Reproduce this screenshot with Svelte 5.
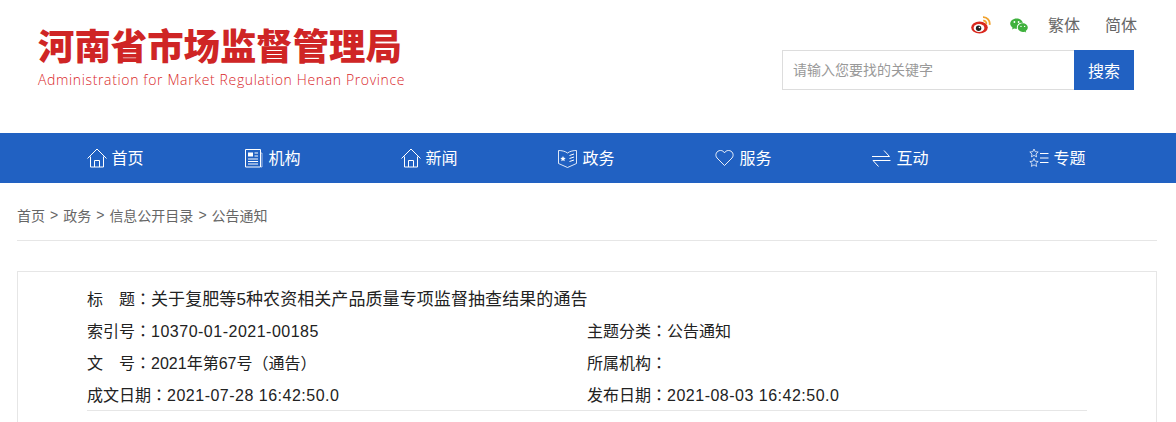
<script>
	const navItems = [
		{ name: '首页', icon: 'home' },
		{ name: '机构', icon: 'news' },
		{ name: '新闻', icon: 'home' },
		{ name: '政务', icon: 'book' },
		{ name: '服务', icon: 'heart' },
		{ name: '互动', icon: 'swap' },
		{ name: '专题', icon: 'stars' }
	];

	const crumbs = ['首页', '政务', '信息公开目录', '公告通知'];

	const rows = [
		[{ label: '索引号', value: '10370-01-2021-00185', num: true }, { label: '主题分类', value: '公告通知' }],
		[{ label: '文　号', value: '2021年第67号', note: '通告' }, { label: '所属机构', value: '' }],
		[{ label: '成文日期', value: '2021-07-28 16:42:50.0', num: true }, { label: '发布日期', value: '2021-08-03 16:42:50.0', num: true }]
	];
</script>

<div class="page">
	<header class="header">
		<div class="logo">
			<div class="logo-cn">河南省市场监督管理局</div>
			<div class="logo-en">Administration for Market Regulation Henan Province</div>
		</div>
		<div class="tools">
			<div class="links">
				<svg class="weibo" width="20" height="18" viewBox="0 0 20 18">
					<ellipse cx="8.5" cy="11.5" rx="8.3" ry="6" fill="#d9281e" />
					<ellipse cx="8" cy="12" rx="5.4" ry="4" fill="#fff" />
					<circle cx="7.6" cy="12.2" r="2.7" fill="#222" />
					<circle cx="8.4" cy="11.5" r="0.8" fill="#fff" />
					<path d="M12 1.2a6.4 6.4 0 0 1 6.6 7.6" fill="none" stroke="#f0a22e" stroke-width="1.8" />
					<path d="M12.2 4.6a3 3 0 0 1 3.2 3.6" fill="none" stroke="#f0a22e" stroke-width="1.6" />
				</svg>
				<svg class="wechat" width="18" height="15" viewBox="0 0 18 15">
					<path d="M6.6 0.4C3 0.4 0.2 2.7 0.2 5.6c0 1.7 1 3.1 2.4 4.1L2 11.6l2.2-1.1c.8.2 1.6.3 2.4.3h.5a4.6 4.6 0 0 1 5.8-5.8C12.400 2.300 9.800 0.400 6.600 0.400z" fill="#3fb13d" />
					<path d="M17.800 9.600c0-2.400-2.300-4.300-5-4.300s-5 1.900-5 4.300 2.300 4.300 5 4.300c.6 0 1.100-.1 1.700-.2l1.700.9-.5-1.500c1.200-.8 2.100-2.100 2.100-3.500z" fill="#3fb13d" />
					<circle cx="4.400" cy="4" r="0.9" fill="#fff" />
					<circle cx="8.600" cy="4" r="0.9" fill="#fff" />
					<circle cx="11" cy="8.400" r="0.7" fill="#fff" />
					<circle cx="14.600" cy="8.400" r="0.7" fill="#fff" />
				</svg>
				<span class="lang">繁体</span>
				<span class="lang">简体</span>
			</div>
			<div class="search">
				<input class="search-input" type="text" placeholder="请输入您要找的关键字" />
				<button class="search-btn">搜索</button>
			</div>
		</div>
	</header>

	<nav class="nav">
		{#each navItems as item}
			<div class="nav-item">
				<svg class="nav-icon" width="20" height="20" viewBox="0 0 20 20" fill="none" stroke="#fff" stroke-width="1">
					{#if item.icon === 'home'}
						<path d="M0.500 10.500L10 1l9.500 9.500" />
						<path d="M3.500 8.500v10.500h13V8.500" />
						<path d="M7.500 19v-6.500h5V19" />
					{:else if item.icon === 'news'}
						<path d="M1.500 1.500h15v17.500h-15z" />
						<path d="M16.500 5h1.500v14h-1" opacity="0.6" />
						<rect x="4" y="4.500" width="5" height="4" fill="#fff" stroke="none" />
						<path d="M10.500 5h3.500M10.500 8h3.500M4 11h10M4 13.500h10M4 16h10" />
					{:else if item.icon === 'book'}
						<path d="M0.500 2.500c3 0 6.500.6 9 2.500 2.500-1.900 6-2.500 9-2.500v13L9.500 19.500 0.500 15.500z" opacity="0.85" />
						<path d="M5 8l.8 1.800 1.900.2-1.400 1.300.4 1.900L5 12.200l-1.700 1 .4-1.900L2.300 10l1.900-.2z" fill="#fff" stroke="none" />
						<path d="M11.500 7.500l4.500-1.500M11.500 10.500l4.500-1.500M11.500 13.500l4.500-1.500" />
					{:else if item.icon === 'heart'}
						<path d="M9.500 17.500L2 10C-0.500 7 1.500 2.500 5.500 2.500c2 0 3.200 1 4 2.300.8-1.300 2-2.300 4-2.300 4 0 6 4.500 3.500 7.500z" opacity="0.9" />
					{:else if item.icon === 'swap'}
						<path d="M0 8.500h17.500L12 2.500" />
						<path d="M18.500 12.500H1l5.500 6" />
					{:else}
						<path d="M5 1l1.200 2.700 3 .3-2.200 2 .6 2.900L5 7.400 2.400 8.900 3 6 .8 4l3-.3z" opacity="0.75" />
						<path d="M5 10.500l1.200 2.700 3 .3-2.200 2 .6 2.900L5 16.900l-2.600 1.500.6-2.900-2.200-2 3-.3z" opacity="0.75" />
						<path d="M11 5.500h8.500M11 10h8.500M11 14.500h8.500" />
					{/if}
				</svg>
				<span class="nav-label">{item.name}</span>
			</div>
		{/each}
	</nav>

	<main class="main">
		<div class="crumbs">
			{#each crumbs as crumb, i}
				{#if i > 0}<span class="sep">&gt;</span>{/if}
				<span>{crumb}</span>
			{/each}
		</div>

		<section class="box">
			<div class="info">
				<div class="info-title">标　题<span class="punct">：</span><span class="title-text">关于复肥等5种农资相关产品质量专项监督抽查结果的通告</span></div>
				{#each rows as row}
					<div class="info-row">
						{#each row as cell}
							<div>
								{cell.label}<span class="punct">：</span><span class:num={cell.num}>{cell.value}</span>{#if cell.note}<span class="punct">（</span>{cell.note}<span class="punct">）</span>{/if}
							</div>
						{/each}
					</div>
				{/each}
			</div>
		</section>
	</main>
</div>

<style>
	:global(body) {
		margin: 0;
		background: #fff;
	}

	.page {
		height: 422px;
		overflow: hidden;
		font-family: "Liberation Sans", "Noto Sans CJK SC", sans-serif;
		color: #333;
	}

	.header {
		height: 133px;
		display: flex;
		justify-content: space-between;
		padding: 0 39px 0 38px;
	}

	.logo {
		padding-top: 18px;
	}

	.logo-cn {
		font-family: "Noto Sans CJK SC", sans-serif;
		font-size: 36.4px;
		font-weight: 900;
		line-height: 53px;
		color: #cf2525;
	}

	.logo-en {
		font-family: "Open Sans", sans-serif;
		font-size: 14px;
		font-weight: 300;
		line-height: 18px;
		letter-spacing: 0.64px;
		color: #d9272a;
	}

	.tools {
		display: flex;
		flex-direction: column;
		align-items: flex-end;
	}

	.links {
		display: flex;
		align-items: center;
		height: 48px;
		margin-bottom: 2px;
		font-size: 16px;
		color: #666;
	}

	.weibo {
		margin-right: 19px;
		margin-top: 1px;
	}

	.wechat {
		margin-right: 20px;
		margin-top: 2px;
	}

	.lang + .lang {
		margin-left: 25px;
	}

	.search {
		display: flex;
		height: 40px;
		margin-right: 3px;
	}

	.search-input {
		box-sizing: border-box;
		width: 292px;
		height: 40px;
		padding: 0 10px;
		border: 1px solid #ddd;
		border-right: none;
		outline: none;
		font-family: inherit;
		font-size: 14px;
	}

	.search-input::placeholder {
		color: #999;
	}

	.search-btn {
		width: 60px;
		height: 40px;
		border: none;
		padding: 0;
		background: #2161c2;
		color: #fff;
		font-family: inherit;
		font-size: 16px;
	}

	.nav {
		height: 50px;
		background: #2161c2;
		display: grid;
		grid-template-columns: repeat(7, 157px);
		padding-left: 37px;
		color: #fff;
		font-size: 16px;
	}

	.nav-item {
		display: flex;
		align-items: center;
		justify-content: center;
		gap: 4px;
	}

	.nav-label {
		padding-bottom: 2px;
	}

	.main {
		padding: 0 19px 0 17px;
	}

	.crumbs {
		box-sizing: border-box;
		height: 58px;
		padding-top: 7px;
		display: flex;
		align-items: center;
		gap: 5px;
		border-bottom: 1px solid #e6e6e6;
		font-size: 14px;
		color: #666;
	}

	.box {
		margin-top: 30px;
		border: 1px solid #e6e6e6;
		padding: 10px 69px 40px;
	}

	.info {
		border-bottom: 1px solid #e6e6e6;
		font-size: 16px;
		color: #222;
	}

	.info-title,
	.info-row {
		height: 32px;
		line-height: 32px;
	}

	.title-text {
		font-size: 17px;
		letter-spacing: 0.08px;
	}

	.info-row {
		display: grid;
		grid-template-columns: 500px 1fr;
	}

	.num {
		letter-spacing: 0.5px;
	}

	.punct {
		font-family: "Noto Sans CJK TC", sans-serif;
	}
</style>
